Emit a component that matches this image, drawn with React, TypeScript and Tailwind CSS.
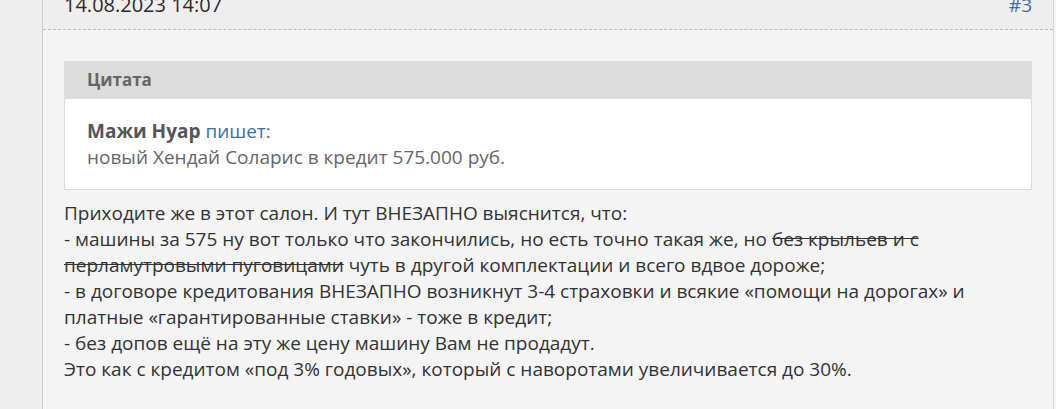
import React from "react";

export default function App() {
  const font = { fontFamily: "'Open Sans', 'Noto Sans', sans-serif" };
  return (
    <div className="flex w-[1056px] h-[409px] overflow-hidden bg-[#eeeeee] text-[19px] leading-[26px]" style={font}>
      <div className="w-[43px] shrink-0 bg-[#eeeeee] border-r border-[#cccccc]" />
      <div className="w-[1011px] shrink-0 bg-[#f4f4f4] border-r border-[#d3d9e2] flex flex-col">
        <div className="h-[30px] bg-[#eeeeee] border-b border-dashed border-[#bbbbbb] px-[21px] flex justify-between">
          <span className="-mt-[8px] text-[20px] text-[#2a2a2a]">14.08.2023 14:07</span>
          <a className="-mt-[8px] text-[#3d6eb0]">#3</a>
        </div>
        <div className="px-[21px] pt-[31px]">
          <div className="border border-[#dddddd] bg-white">
            <div className="h-[38px] -mt-px -mx-px bg-[#dcdcdc] px-[23px] flex items-center text-[17px] font-bold text-[#666666]">Цитата</div>
            <div className="px-[22px] pt-[19px] pb-[19px] text-[#666666]">
              <div>
                <span className="font-bold text-[#555555]">Мажи Нуар</span>{" "}
                <a className="text-[#3d6eb0]">пишет</a>:
              </div>
              <div>новый Хендай Соларис в кредит 575.000 руб.</div>
            </div>
          </div>
          <div className="mt-[10px] text-[#333333] whitespace-nowrap">
            <div>Приходите же в этот салон. И тут ВНЕЗАПНО выяснится, что:</div>
            <div>- машины за 575 ну вот только что закончились, но есть точно такая же, но <s>без крыльев и с</s></div>
            <div><s>перламутровыми пуговицами</s> чуть в другой комплектации и всего вдвое дороже;</div>
            <div>- в договоре кредитования ВНЕЗАПНО возникнут 3-4 страховки и всякие «помощи на дорогах» и</div>
            <div>платные «гарантированные ставки» - тоже в кредит;</div>
            <div>- без допов ещё на эту же цену машину Вам не продадут.</div>
            <div>Это как с кредитом «под 3% годовых», который с наворотами увеличивается до 30%.</div>
          </div>
        </div>
      </div>
      <div className="flex-1 bg-[#f4f4f4]" />
    </div>
  );
}
